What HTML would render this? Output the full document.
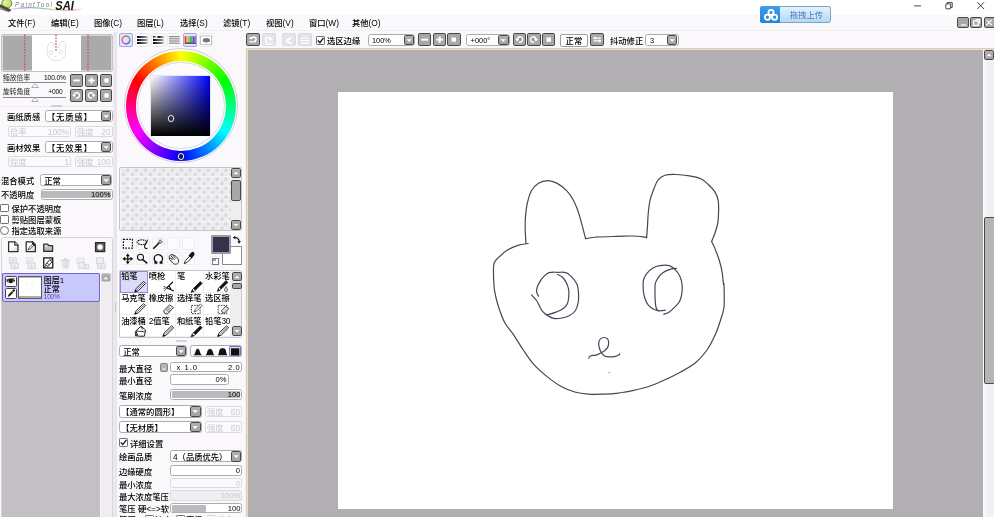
<!DOCTYPE html>
<html lang="zh"><head><meta charset="utf-8"><title>PaintTool SAI</title>
<style>
html,body{margin:0;padding:0;}
body{width:994px;height:517px;overflow:hidden;position:relative;background:#faf8fb;font-family:"Liberation Sans","Noto Sans CJK SC",sans-serif;font-size:8.3px;color:#000;font-weight:500;}
#root{position:absolute;left:0;top:0;width:994px;height:517px;overflow:hidden;will-change:transform;}
.a{position:absolute;box-sizing:border-box;}
.t{position:absolute;white-space:nowrap;line-height:10px;height:10px;}
.btn{border:1.6px solid #484848;border-radius:1.8px;background:#a8a7a8;}
.btn svg{position:absolute;left:0;top:0;width:100%;height:100%;display:block;}
.btn.dis{border-color:#dbd9dd;background:#e6e4e8;}
.inp{background:#fff;border:1px solid #adabaf;border-radius:2.5px;}
.inpd{background:#fbfafc;border:1px solid #dcdade;border-radius:2px;}
.dt{color:#cbc9ce;font-weight:400;}
.bar{background:#fff;border:1px solid #adabaf;border-radius:2.5px;}
.sw{position:absolute;}
svg{display:block;}
</style></head>
<body><div id="root">
<div class="a " style="left:0.00px;top:0.00px;width:994.00px;height:14.90px;background:#fff;"></div>
<div class="a " style="left:0.00px;top:30.20px;width:994.00px;height:0.60px;background:#f1eff3;"></div>
<div class="a " style="left:0.00px;top:30.80px;width:994.00px;height:0.80px;background:#fdfcfd;"></div>
<svg class="a" style="left:0;top:0;" width="90" height="14" viewBox="0 0 90 14">
<defs><linearGradient id="rb" x1="0" x2="1" y1="0" y2="0"><stop offset="0" stop-color="#b090d0" stop-opacity="0.2"/><stop offset="0.2" stop-color="#8aa0e0"/><stop offset="0.45" stop-color="#9ad0a0"/><stop offset="0.65" stop-color="#e8d890"/><stop offset="0.85" stop-color="#e8a0b0"/><stop offset="1" stop-color="#e8a0c0" stop-opacity="0"/></linearGradient></defs>
<ellipse cx="6.8" cy="3.4" rx="5" ry="4.7" fill="#cfe07c" stroke="#5f8a3c" stroke-width="1"/>
<ellipse cx="5.4" cy="2.6" rx="2.2" ry="1.8" fill="#e4eea0"/>
<path d="M-1 5.2 L10.6 10.6" stroke="#35562c" stroke-width="2.4"/>
<path d="M-1 6.6 L8 10.8" stroke="#b8322c" stroke-width="1"/>
<path d="M0 8.6 L9 11.6" stroke="#54408a" stroke-width="1.2" stroke-opacity="0.7"/>
<path d="M10 9.4 Q23 6.9 37 7.8 Q47 8.7 55 9.9 Q68 11.2 84 8.8" fill="none" stroke="url(#rb)" stroke-width="1.2"/>
<text x="15" y="7" font-family="'Liberation Sans',sans-serif" font-style="italic" font-size="6.4" fill="#7c7c7c" textLength="37" lengthAdjust="spacing">PaintTool</text>
<text x="55.2" y="9.5" font-family="'Liberation Sans',sans-serif" font-style="italic" font-weight="bold" font-size="13.4" fill="#111" textLength="18.6" lengthAdjust="spacingAndGlyphs">SAI</text>
</svg>
<div class="t " style="left:8.00px;top:18.00px;">文件(F)</div>
<div class="t " style="left:51.00px;top:18.00px;">编辑(E)</div>
<div class="t " style="left:94.00px;top:18.00px;">图像(C)</div>
<div class="t " style="left:137.00px;top:18.00px;">图层(L)</div>
<div class="t " style="left:180.00px;top:18.00px;">选择(S)</div>
<div class="t " style="left:223.00px;top:18.00px;">滤镜(T)</div>
<div class="t " style="left:266.00px;top:18.00px;">视图(V)</div>
<div class="t " style="left:309.00px;top:18.00px;">窗口(W)</div>
<div class="t " style="left:352.00px;top:18.00px;">其他(O)</div>
<div class="a " style="left:759.90px;top:5.50px;width:71.50px;height:17.30px;border-radius:2.2px;border:1px solid #78a6c4;background:linear-gradient(#e4f2fc,#b4d8f4);"></div>
<div class="a " style="left:759.90px;top:5.50px;width:20.60px;height:17.30px;border-radius:2.2px 0 0 2.2px;background:linear-gradient(#3d9ee9,#2283da);"></div>
<svg class="a" style="left:763.5px;top:8.5px" width="14" height="12" viewBox="0 0 14 12"><g fill="none" stroke="#fff" stroke-width="1.9"><circle cx="7" cy="3.4" r="2.6"/><circle cx="3.4" cy="8.2" r="2.6"/><circle cx="10.6" cy="8.2" r="2.6"/></g></svg>
<div class="t " style="left:789.80px;top:10.10px;color:#4580ba;font-weight:400;">拖拽上传</div>
<svg class="a" style="left:905px;top:0" width="89" height="14" viewBox="0 0 89 14"><g fill="none" stroke="#222" stroke-width="0.85"><path d="M9.2 5.9 H16"/><rect x="40.8" y="3.9" width="4.9" height="4.9" rx="0.6"/><path d="M42.2 3.9 V2.6 H47.2 V7.4 H45.7"/><path d="M72.3 2.2 L79.1 9.1 M79.1 2.2 L72.3 9.1"/></g></svg>
<div class="a btn" style="left:957.20px;top:17.00px;width:11.40px;height:11.20px;"><svg viewBox="0 0 19 19" preserveAspectRatio="none"></svg></div>
<div class="a btn" style="left:970.40px;top:17.00px;width:11.40px;height:11.20px;"><svg viewBox="0 0 19 19" preserveAspectRatio="none"></svg></div>
<div class="a btn" style="left:983.60px;top:17.00px;width:11.40px;height:11.20px;"><svg viewBox="0 0 19 19" preserveAspectRatio="none"></svg></div>
<svg class="a" style="left:957.6px;top:17.2px" width="37" height="11" viewBox="0 0 37 11"><g fill="none" stroke="#fff" stroke-width="1.2"><path d="M2.8 8 H8.2"/><rect x="15.6" y="4" width="4.6" height="4.4"/><path d="M17.5 2.6 H21.6 V6.4"/><path d="M28.4 2.8 L33.8 8.2 M33.8 2.8 L28.4 8.2"/></g></svg>
<div class="a " style="left:1.00px;top:33.60px;width:111.60px;height:38.40px;background:#aaaaaa;border:1px solid #c4c2c6;border-radius:2.5px;box-shadow:inset 0 0 0 0.8px #e6e6e8;"></div>
<div class="a " style="left:32.20px;top:34.60px;width:48.40px;height:36.40px;background:#fff;"></div>
<svg class="a" style="left:1px;top:34px" width="112" height="38" viewBox="1 34 112 38"><g stroke="#d04474" stroke-width="1.25" stroke-dasharray="1.6 1.3" fill="none"><path d="M24.8 34.6 V71"/><path d="M56 34.6 V52"/><path d="M88 34.6 V71"/></g>
<g fill="none" stroke="#cbcbd3" stroke-width="0.6"><path d="M47.5 54 C46.5 51 47 46.5 49 44 C50 41.5 52.5 42 53.5 44 L54.5 47.5 L59 47.5 C59 45 60 42 62 41.5 C65 41.5 66.5 43.5 65.5 46.5 L65 49 C66.5 53 65 57 62 59 C58 61.5 53 61.5 50 58.5 C48.5 57 48 55.5 47.5 54 Z"/><circle cx="51.2" cy="52.5" r="1.7"/><circle cx="60.6" cy="52" r="1.7"/><path d="M54.6 57.5 L55.6 56.2 L56.6 57.5"/></g></svg>
<div class="t " style="left:3.00px;top:72.50px;font-size:6.8px;color:#3c3c3c;">缩放倍率</div>
<div class="t " style="right:928.20px;top:72.50px;font-size:6.6px;letter-spacing:-0.1px;">100.0%</div>
<div class="a " style="left:3.00px;top:82.20px;width:63.00px;height:1.00px;background:#8a888c;"></div>
<svg class="a" style="left:30.5px;top:83px" width="8" height="5" viewBox="0 0 8 5"><path d="M4 0.5 L7.3 4.5 H0.7 Z" fill="#fff" stroke="#99979b" stroke-width="0.8"/></svg>
<div class="t " style="left:3.00px;top:86.90px;font-size:6.8px;color:#3c3c3c;">旋转角度</div>
<div class="t " style="right:931.40px;top:86.90px;font-size:6.6px;letter-spacing:-0.1px;">+000</div>
<div class="a " style="left:3.00px;top:96.60px;width:63.00px;height:1.00px;background:#8a888c;"></div>
<svg class="a" style="left:30.5px;top:97.4px" width="8" height="5" viewBox="0 0 8 5"><path d="M4 0.5 L7.3 4.5 H0.7 Z" fill="#fff" stroke="#99979b" stroke-width="0.8"/></svg>
<div class="a btn" style="left:70.30px;top:74.40px;width:12.80px;height:12.70px;"><svg viewBox="0 0 19 19" preserveAspectRatio="none"><rect x="4" y="8" width="11.4" height="3.4" fill="#fff"/></svg></div>
<div class="a btn" style="left:85.00px;top:74.40px;width:12.80px;height:12.70px;"><svg viewBox="0 0 19 19" preserveAspectRatio="none"><rect x="4" y="8" width="11.4" height="3.4" fill="#fff"/><rect x="8" y="4.2" width="3.4" height="11" fill="#fff"/></svg></div>
<div class="a btn" style="left:99.70px;top:74.40px;width:12.80px;height:12.70px;"><svg viewBox="0 0 19 19" preserveAspectRatio="none"><rect x="6" y="6" width="7.6" height="7.4" fill="#fff"/></svg></div>
<div class="a btn" style="left:70.30px;top:89.10px;width:12.80px;height:12.70px;"><svg viewBox="0 0 19 19" preserveAspectRatio="none"><path d="M8.63 13.82 A4.6 4.6 0 1 0 5.62 9.1" fill="none" stroke="#fff" stroke-width="2.5"/><path d="M2 8.4 L9.2 8.4 L5.6 12.8 Z" fill="#fff"/><circle cx="10.2" cy="9.5" r="1.6" fill="#8a898a"/></svg></div>
<div class="a btn" style="left:85.00px;top:89.10px;width:12.80px;height:12.70px;"><svg viewBox="0 0 19 19" preserveAspectRatio="none"><path d="M10.37 13.82 A4.6 4.6 0 1 1 13.38 9.1" fill="none" stroke="#fff" stroke-width="2.5"/><path d="M17 8.4 L9.8 8.4 L13.4 12.8 Z" fill="#fff"/><circle cx="8.8" cy="9.5" r="1.6" fill="#8a898a"/></svg></div>
<div class="a btn" style="left:99.70px;top:89.10px;width:12.80px;height:12.70px;"><svg viewBox="0 0 19 19" preserveAspectRatio="none"><rect x="6" y="6" width="7.6" height="7.4" fill="#fff"/></svg></div>
<div class="a " style="left:0.00px;top:105.60px;width:113.00px;height:1.00px;background:#eceaee;"></div>
<div class="a " style="left:51.00px;top:105.20px;width:10.50px;height:1.80px;background:#cfcdd1;border-radius:1px;"></div>
<div class="t " style="left:7.00px;top:111.80px;">画纸质感</div>
<div class="a inp" style="left:45.00px;top:110.00px;width:67.50px;height:12.40px;"></div><div class="t " style="left:47.00px;top:112.00px;letter-spacing:0.8px;">【无质感】</div><div class="a btn" style="left:101.10px;top:111.00px;width:10.40px;height:10.40px;border-width:1.3px;background:linear-gradient(#b2b1b2,#a3a2a3);"><svg viewBox="0 0 19 19" preserveAspectRatio="none"><path d="M3.4 7.4 L15.6 7.4 L9.5 13.4 Z" fill="#fff"/></svg></div>
<div class="a inpd" style="left:7.60px;top:125.80px;width:63.60px;height:11.00px;"></div>
<div class="t dt" style="left:10.00px;top:127.00px;">倍率</div>
<div class="t dt" style="right:925.00px;top:127.00px;">100%</div>
<div class="a inpd" style="left:75.00px;top:125.80px;width:37.50px;height:11.00px;"></div>
<div class="t dt" style="left:77.00px;top:127.00px;">强度</div>
<div class="t dt" style="right:883.50px;top:127.00px;">20</div>
<div class="t " style="left:7.00px;top:142.50px;">画材效果</div>
<div class="a inp" style="left:45.00px;top:140.50px;width:67.50px;height:12.60px;"></div><div class="t " style="left:47.00px;top:142.60px;letter-spacing:0.8px;">【无效果】</div><div class="a btn" style="left:101.10px;top:141.60px;width:10.40px;height:10.40px;border-width:1.3px;background:linear-gradient(#b2b1b2,#a3a2a3);"><svg viewBox="0 0 19 19" preserveAspectRatio="none"><path d="M3.4 7.4 L15.6 7.4 L9.5 13.4 Z" fill="#fff"/></svg></div>
<div class="a inpd" style="left:7.60px;top:156.00px;width:63.60px;height:11.20px;"></div>
<div class="t dt" style="left:10.00px;top:157.30px;">程度</div>
<div class="t dt" style="right:925.00px;top:157.30px;">1</div>
<div class="a inpd" style="left:75.00px;top:156.00px;width:37.50px;height:11.20px;"></div>
<div class="t dt" style="left:77.00px;top:157.30px;">强度</div>
<div class="t dt" style="right:883.50px;top:157.30px;">100</div>
<div class="t " style="left:1.00px;top:175.50px;">混合模式</div>
<div class="a inp" style="left:40.30px;top:173.60px;width:72.20px;height:12.40px;"></div><div class="t " style="left:44.30px;top:175.60px;">正常</div><div class="a btn" style="left:101.10px;top:174.60px;width:10.40px;height:10.40px;border-width:1.3px;background:linear-gradient(#b2b1b2,#a3a2a3);"><svg viewBox="0 0 19 19" preserveAspectRatio="none"><path d="M3.4 7.4 L15.6 7.4 L9.5 13.4 Z" fill="#fff"/></svg></div>
<div class="t " style="left:1.00px;top:190.00px;">不透明度</div>
<div class="a bar" style="left:40.50px;top:188.80px;width:72.00px;height:11.20px;"></div>
<div class="a " style="left:42.40px;top:190.60px;width:68.20px;height:7.60px;background:#bab9bb;border-radius:1px;"></div>
<div class="t " style="right:883.50px;top:190.10px;font-size:7.6px;">100%</div>
<div class="a " style="left:0.00px;top:203.60px;width:9.00px;height:8.80px;background:#fff;border:1px solid #707070;border-radius:1.2px;"></div>
<div class="t " style="left:11.50px;top:203.90px;">保护不透明度</div>
<div class="a " style="left:0.00px;top:214.80px;width:9.00px;height:8.80px;background:#fff;border:1px solid #707070;border-radius:1.2px;"></div>
<div class="t " style="left:11.50px;top:215.30px;">剪贴图层蒙板</div>
<div class="a " style="left:0.00px;top:226.00px;width:9.00px;height:9.00px;background:#fff;border:1px solid #707070;border-radius:50%;"></div>
<div class="t " style="left:11.50px;top:226.30px;">指定选取来源</div>
<div class="a " style="left:1.00px;top:237.00px;width:111.80px;height:290.00px;background:#faf8fb;border:1px solid #d6d4d8;border-radius:2.5px;"></div>
<div class="a " style="left:2.40px;top:272.60px;width:98.00px;height:250.00px;background:#c2c0c3;"></div>
<div class="a " style="left:100.60px;top:272.60px;width:11.00px;height:250.00px;background:#efedf0;"></div>
<div class="a " style="left:2.40px;top:272.60px;width:98.00px;height:29.00px;background:#c9c8fd;border:1.4px solid #7465cc;border-radius:2px;"></div>
<div class="a " style="left:5.10px;top:276.00px;width:11.60px;height:10.60px;background:#fff;border:1.1px solid #444;border-radius:1.6px;"></div>
<div class="a " style="left:5.10px;top:288.30px;width:11.60px;height:11.20px;background:#fff;border:1.1px solid #444;border-radius:1.6px;"></div>
<svg class="a" style="left:5.2px;top:276px" width="12" height="24" viewBox="0 0 12 24"><path d="M1.6 5.4 Q5.6 1.4 9.8 5" stroke="#222" stroke-width="1.3" fill="none"/><path d="M1.8 5.6 Q5.8 8.4 9.6 5.4" stroke="#444" stroke-width="0.7" fill="none"/><circle cx="5.8" cy="5.2" r="1.9" fill="#111"/><path d="M1.4 3.6 L9.6 2.6" stroke="#333" stroke-width="0.8"/><path d="M2.6 21 L3.6 18.6 L7 15 L8.4 16.4 L5 20 Z" fill="#222"/><path d="M7.2 14.6 L8.8 13 L10.2 14.4 L8.6 16 Z" fill="#111"/></svg>
<div class="a " style="left:18.20px;top:276.00px;width:23.80px;height:23.40px;background:#fff;border:1.2px solid #5c5c5c;"></div>
<div class="a " style="left:19.40px;top:296.20px;width:21.40px;height:2.20px;background:#adadad;"></div>
<div class="a " style="left:19.40px;top:277.20px;width:21.40px;height:1.30px;background:#bdbdbd;"></div>
<svg class="a" style="left:24px;top:280px" width="12" height="12" viewBox="0 0 12 12"><g fill="none" stroke="#e6e6ea" stroke-width="0.5"><path d="M2 6 C1.8 3.6 2.6 2 3.6 2.4 L4.4 4 L7.2 4 C7.4 2.4 8.6 1.8 9.4 2.8 L9.4 5 C10 7.6 8.6 9.4 6 9.6 C3.6 9.6 2.2 8 2 6 Z"/></g></svg>
<div class="t " style="left:43.80px;top:275.80px;font-size:8px;">图层1</div>
<div class="t " style="left:43.80px;top:284.90px;font-size:8px;">正常</div>
<div class="t " style="left:43.80px;top:291.50px;font-size:6.6px;color:#5050a0;letter-spacing:-0.3px;">100%</div>
<div class="a btn" style="border-color:#cdcbd0;background:#dbd9dd;left:101.10px;top:272.60px;width:9.80px;height:9.80px;border-width:1.3px;background:linear-gradient(#b2b1b2,#a3a2a3);"><svg viewBox="0 0 19 19" preserveAspectRatio="none"><path d="M3.4 12.6 L15.6 12.6 L9.5 6.6 Z" fill="#fff"/></svg></div>
<svg class="a" style="left:2px;top:238px" width="110" height="34" viewBox="2 238 110 34">
<defs><linearGradient id="pg" x1="0" y1="0" x2="1" y2="1"><stop offset="0.45" stop-color="#fff"/><stop offset="1" stop-color="#d4d4d8"/></linearGradient><linearGradient id="fg" x1="0" y1="0" x2="0" y2="1"><stop offset="0" stop-color="#e2e2e4"/><stop offset="1" stop-color="#a4a4a8"/></linearGradient><radialGradient id="mg"><stop offset="0.55" stop-color="#fff"/><stop offset="1" stop-color="#fff" stop-opacity="0"/></radialGradient></defs>
<g stroke="#2c2c2c" stroke-width="1.25" stroke-linejoin="round">
<path d="M8.6 241.8 H14.8 L18 245 V251.6 H8.6 Z" fill="url(#pg)"/><path d="M14.8 241.8 V245 H18" fill="#fff"/>
<path d="M26.2 241.8 H32.2 L35.4 245 V251.6 H26.2 Z" fill="url(#pg)"/><path d="M32.2 241.8 L35.4 245 L33 245.6 Z" fill="#2c2c2c"/><path d="M28 250 L29 247.6 L32.6 244.4 L33.6 245.6 L30.2 249 Z" fill="#fff" stroke-width="0.8"/>
<path d="M43.7 244 H47.6 L48.8 245.6 H52.6 V251.3 H43.7 Z" fill="url(#fg)"/>
</g>
<rect x="95.5" y="242.6" width="9.2" height="9" fill="#5e5e60" stroke="#2a2a2a" stroke-width="1.2"/><circle cx="100.1" cy="247.1" r="3.6" fill="url(#mg)"/>
<g fill="#f0eff1" stroke="#d6d4d9" stroke-width="1">
<rect x="9.4" y="257.8" width="6.8" height="5.4"/><rect x="11" y="263" width="7.2" height="5.6"/>
<rect x="26.2" y="257.8" width="6.8" height="5.4" stroke-dasharray="1.2 0.9"/><rect x="28" y="263" width="7.2" height="5.6"/>
<path d="M62.4 260.8 H68.6 L68 267.8 H63 Z"/><path d="M60.8 260.4 H70.2 M63.8 258.8 H67.2" fill="none" stroke-width="1.3"/>
<rect x="77" y="258" width="7" height="5.6" stroke-dasharray="1.2 0.9"/><rect x="78.6" y="262.6" width="6" height="5.6"/><rect x="84.4" y="264.6" width="4.4" height="4"/>
<rect x="96.4" y="257.8" width="7" height="6"/><rect x="97.6" y="263.8" width="7.4" height="4.8"/>
</g>
<g stroke="#d0ced3" stroke-width="0.8" fill="none"><path d="M11.4 260.4 H14.2 M12.8 259 V261.8 M14.6 264.6 V267.4 M13.4 266.2 L14.6 267.4 L15.8 266.2"/><path d="M28.2 260.4 H31 M31.6 264.6 V267.4 M30.4 266.2 L31.6 267.4 L32.8 266.2"/><path d="M65 262 V266.8 M66.4 262 V266.8"/><path d="M99.6 266.2 H103 M101.3 264.8 V267.6"/></g>
<g><rect x="43.7" y="257.9" width="9" height="10" fill="#fff" stroke="#222" stroke-width="1.35"/><path d="M44.4 267.2 L52 258.6" stroke="#222" stroke-width="1"/><path d="M45.4 264.6 L49.6 259.8 L52.2 261.6 L48 266.6 Z" fill="#f0f0f0" stroke="#222" stroke-width="0.9"/><path d="M46.8 263 L49.4 265" stroke="#222" stroke-width="0.7"/></g>
</svg>
<div class="a " style="left:113.40px;top:31.60px;width:3.20px;height:490.00px;background:linear-gradient(to right,#edebef,#e6e4e8);"></div>
<div class="a " style="left:114.90px;top:302.00px;width:1.30px;height:10.00px;background:#c9c7cb;border-radius:1px;"></div>
<div class="a " style="left:118.80px;top:33.40px;width:14.40px;height:13.20px;background:#e4e2fa;border:1px solid #a8a4dc;border-radius:2px;"></div>
<div class="a " style="left:134.85px;top:33.40px;width:14.40px;height:13.20px;background:#fbfafc;border:1px solid #ebe9ed;border-radius:2px;"></div>
<div class="a " style="left:150.90px;top:33.40px;width:14.40px;height:13.20px;background:#fbfafc;border:1px solid #ebe9ed;border-radius:2px;"></div>
<div class="a " style="left:166.95px;top:33.40px;width:14.40px;height:13.20px;background:#fbfafc;border:1px solid #ebe9ed;border-radius:2px;"></div>
<div class="a " style="left:183.00px;top:33.40px;width:14.40px;height:13.20px;background:#e4e2fa;border:1px solid #a8a4dc;border-radius:2px;"></div>
<div class="a " style="left:199.05px;top:33.40px;width:14.40px;height:13.20px;background:#fbfafc;border:1px solid #ebe9ed;border-radius:2px;"></div>
<svg class="a" style="left:118px;top:33px" width="100" height="14" viewBox="118 33 100 14">
<defs><linearGradient id="hg" x1="0" x2="1"><stop offset="0" stop-color="#000"/><stop offset="1" stop-color="#000" stop-opacity="0.35"/></linearGradient></defs>
<circle cx="126" cy="40" r="3.8" fill="none" stroke="#c050c0" stroke-width="1.3"/>
<path d="M126 36.2 A3.8 3.8 0 0 1 129.8 40" fill="none" stroke="#60c060" stroke-width="1.3"/>
<path d="M129.8 40 A3.8 3.8 0 0 1 126 43.8" fill="none" stroke="#4080e0" stroke-width="1.3"/>
<path d="M122.2 40 A3.8 3.8 0 0 1 126 36.2" fill="none" stroke="#e08040" stroke-width="1.3"/>
<g fill="url(#hg)"><rect x="137" y="36" width="10.4" height="2"/><rect x="137" y="39" width="10.4" height="2"/><rect x="137" y="42" width="10.4" height="2"/></g>
<g fill="url(#hg)"><rect x="153" y="36" width="3" height="1.6"/><rect x="157.5" y="36" width="6" height="2"/><rect x="153" y="39" width="10.4" height="2"/><rect x="153" y="42" width="10.4" height="2"/></g>
<g fill="#8a8a8a"><rect x="169" y="36" width="10.6" height="1.2"/><rect x="169" y="38.2" width="10.6" height="1.2"/><rect x="169" y="40.4" width="10.6" height="1.2"/><rect x="169" y="42.6" width="10.6" height="1.2"/></g>
<g><rect x="184.6" y="36.2" width="1.5" height="6" fill="#e04040"/><rect x="186.2" y="36.2" width="1.5" height="6" fill="#e0a040"/><rect x="187.8" y="36.2" width="1.5" height="6" fill="#d0d040"/><rect x="189.4" y="36.2" width="1.5" height="6" fill="#40b040"/><rect x="191" y="36.2" width="1.5" height="6" fill="#40b0c0"/><rect x="192.6" y="36.2" width="1.5" height="6" fill="#4060d0"/><rect x="194.2" y="36.2" width="1.5" height="6" fill="#a040c0"/><rect x="184.6" y="42.4" width="11.2" height="1.4" fill="#333"/></g>
<rect x="200.6" y="36" width="11" height="8.4" fill="#fff" stroke="#b8b6ba" stroke-width="0.8"/><ellipse cx="206.4" cy="40.2" rx="3.6" ry="2.2" fill="#777"/>
</svg>
<div class="a " style="left:123.50px;top:48.40px;width:114.80px;height:114.80px;border-radius:50%;border:1px solid #cfcdd6;background:#fefdfe;"></div>
<div class="a " style="left:125.60px;top:50.50px;width:110.60px;height:110.60px;border-radius:50%;background:conic-gradient(from 0deg,#ffff00,#00ff00,#00ffff,#0000ff,#ff00ff,#ff0000,#ffff00);"></div>
<div class="a " style="left:136.10px;top:61.00px;width:89.60px;height:89.60px;border-radius:50%;background:#fefdfe;"></div>
<div class="a " style="left:137.20px;top:62.10px;width:87.40px;height:87.40px;border-radius:50%;background:#fbfafc;border:1px solid #d9d7de;"></div>
<div class="a " style="left:150.40px;top:75.40px;width:60.40px;height:60.80px;background:#e6e4e8;"></div>
<div class="a " style="left:151.20px;top:76.20px;width:59.00px;height:59.40px;background:linear-gradient(to bottom,rgba(0,0,0,0),#000),linear-gradient(to right,#fff,#0000ff);"></div>
<div class="a " style="left:167.70px;top:115.30px;width:6.80px;height:6.80px;border-radius:50%;border:1.8px solid #f0f0f0;box-shadow:0 0 0 0.5px #555, inset 0 0 0 1px #1a1a1a;"></div>
<div class="a " style="left:177.60px;top:153.20px;width:6.80px;height:6.80px;border-radius:50%;border:1.8px solid #f6f6f6;box-shadow:0 0 0 0.6px #333, inset 0 0 0 1.1px #111;"></div>
<div class="a " style="left:119.40px;top:166.60px;width:122.80px;height:64.60px;border:1px solid #c6c4c8;border-radius:2px;background:#f3f3f5;"></div>
<svg class="a" style="left:120.5px;top:167.7px" width="110" height="62.4" viewBox="0 0 110 62.4"><defs><pattern id="ck" width="8.95" height="8.95" patternUnits="userSpaceOnUse"><rect width="8.95" height="8.95" fill="#f7f7f9"/><rect x="0.6" y="0.5" width="3.7" height="3.5" fill="#ececef"/><rect x="4.8" y="4.6" width="3.7" height="3.5" fill="#ececef"/><rect x="4.8" y="0.5" width="3.7" height="3.5" fill="#d9d9dd"/><rect x="0.6" y="4.6" width="3.7" height="3.5" fill="#d9d9dd"/></pattern></defs><rect width="110" height="62.4" fill="url(#ck)"/></svg>
<div class="a " style="left:230.60px;top:167.60px;width:10.60px;height:62.60px;background:#efedf0;"></div>
<div class="a btn" style="left:230.80px;top:168.40px;width:10.00px;height:9.90px;border-width:1.3px;background:linear-gradient(#b2b1b2,#a3a2a3);"><svg viewBox="0 0 19 19" preserveAspectRatio="none"><path d="M3.4 12.6 L15.6 12.6 L9.5 6.6 Z" fill="#fff"/></svg></div>
<div class="a btn" style="left:230.80px;top:180.00px;width:10.00px;height:20.60px;"></div>
<div class="a btn" style="left:230.80px;top:220.00px;width:10.00px;height:9.60px;border-width:1.3px;background:linear-gradient(#b2b1b2,#a3a2a3);"><svg viewBox="0 0 19 19" preserveAspectRatio="none"><path d="M3.4 7.4 L15.6 7.4 L9.5 13.4 Z" fill="#fff"/></svg></div>
<div class="a " style="left:121.20px;top:237.00px;width:13.20px;height:13.20px;background:#fbfafc;border:1px solid #eeecf0;border-radius:1.5px;"></div>
<div class="a " style="left:136.35px;top:237.00px;width:13.20px;height:13.20px;background:#fbfafc;border:1px solid #eeecf0;border-radius:1.5px;"></div>
<div class="a " style="left:151.50px;top:237.00px;width:13.20px;height:13.20px;background:#fbfafc;border:1px solid #eeecf0;border-radius:1.5px;"></div>
<div class="a " style="left:166.65px;top:237.00px;width:13.20px;height:13.20px;background:#fbfafc;border:1px solid #eeecf0;border-radius:1.5px;"></div>
<div class="a " style="left:181.80px;top:237.00px;width:13.20px;height:13.20px;background:#fbfafc;border:1px solid #eeecf0;border-radius:1.5px;"></div>
<div class="a " style="left:121.20px;top:252.20px;width:13.20px;height:13.20px;background:#fbfafc;border:1px solid #eeecf0;border-radius:1.5px;"></div>
<div class="a " style="left:136.35px;top:252.20px;width:13.20px;height:13.20px;background:#fbfafc;border:1px solid #eeecf0;border-radius:1.5px;"></div>
<div class="a " style="left:151.50px;top:252.20px;width:13.20px;height:13.20px;background:#fbfafc;border:1px solid #eeecf0;border-radius:1.5px;"></div>
<div class="a " style="left:166.65px;top:252.20px;width:13.20px;height:13.20px;background:#fbfafc;border:1px solid #eeecf0;border-radius:1.5px;"></div>
<div class="a " style="left:181.80px;top:252.20px;width:13.20px;height:13.20px;background:#fbfafc;border:1px solid #eeecf0;border-radius:1.5px;"></div>
<svg class="a" style="left:120px;top:236px" width="78" height="31" viewBox="120 236 78 31">
<rect x="123.4" y="239.3" width="9" height="8.8" fill="none" stroke="#111" stroke-width="1.2" stroke-dasharray="1.7 1.2"/>
<g fill="none" stroke="#1a1a1a" stroke-width="1.1"><ellipse cx="141.8" cy="242.2" rx="4.6" ry="2.4" stroke-dasharray="1.8 0.7"/><path d="M147.4 239.6 C147.6 242 145.2 244.4 144.6 245.6 C144 247.6 145.8 249.2 147.4 248.2"/></g>
<path d="M153.3 248.8 L159.2 242.8" stroke="#111" stroke-width="1.6"/><circle cx="160.2" cy="241.8" r="1.3" fill="#fff" stroke="#222" stroke-width="0.8"/><g stroke="#666" stroke-width="0.6"><path d="M160.2 238.6 V239.8 M163.4 241.8 H162.2 M162.6 239.4 L161.8 240.2 M162.6 244.2 L161.8 243.4 M157.8 239.4 L158.6 240.2"/></g>
<g stroke="#111" stroke-width="1.2" fill="#111"><path d="M127.8 255 V262.6 M124 258.8 H131.6" fill="none"/><path d="M127.8 253.4 L129.9 256.2 H125.7 Z M127.8 264.2 L129.9 261.4 H125.7 Z M122.4 258.8 L125.2 256.7 V260.9 Z M133.2 258.8 L130.4 256.7 V260.9 Z" stroke="none"/></g>
<circle cx="140.5" cy="257.3" r="3" fill="none" stroke="#111" stroke-width="1.05"/><path d="M142.8 259.6 L147.2 263.4" stroke="#111" stroke-width="1.5"/>
<path d="M156 262.2 C153.4 260 153.6 256.2 156.4 255 C159.4 253.8 162.8 255.8 162.6 258.8 C162.5 260.2 161.8 261.4 160.8 262.2" fill="none" stroke="#111" stroke-width="1.3"/><path d="M154.4 261.4 H157.4 V263.8 H154.4 Z M159.6 261.4 H162.6 V263.8 H159.6 Z" fill="#111"/>
<g fill="none" stroke="#222" stroke-width="0.9"><path d="M169.2 257.6 C168.8 255.2 171.4 253.8 173.6 255 C176.8 256.4 179.2 259.2 178.4 262.2 C177.6 264.6 174.6 264.8 172.8 263 L169.6 259.6 Z"/><path d="M170.6 255.4 L174.2 259.6 M172.4 254.6 L175.6 258.4 M169 258.4 L171.8 258.2 M171.4 259.8 L172.8 259"/></g>
<path d="M184.2 263.6 L185.4 260.6 L190 255.8 L191.8 257.6 L187.2 262.4 Z" fill="#fff" stroke="#111" stroke-width="0.9"/><path d="M189.4 255.4 L191.8 252.8 C193 251.8 194.6 253.2 193.8 254.6 L191.6 257.6 Z" fill="#111" stroke="#111" stroke-width="1.1"/>
</svg>
<div class="a " style="left:222.00px;top:246.00px;width:20.00px;height:19.20px;background:#fff;border:1px solid #8c8a8e;"></div>
<div class="a " style="left:211.00px;top:234.60px;width:19.80px;height:19.80px;background:#33334c;border:2px solid #9c9aa2;border-radius:1.2px;"></div>
<svg class="a" style="left:232px;top:235px" width="10" height="10" viewBox="0 0 10 10"><path d="M2 2.6 C5 2 7.4 4 7.2 7" fill="none" stroke="#111" stroke-width="1.2"/><path d="M0.8 2.8 L3.2 0.8 L3.4 4.2 Z M7.2 8.8 L5.4 6.2 L8.9 6.2 Z" fill="#111"/></svg>
<div class="a " style="left:210.40px;top:256.40px;width:9.80px;height:9.80px;background:#fbfafc;border:1px solid #efedf1;border-radius:1.5px;"></div>
<div class="a " style="left:212.00px;top:257.90px;width:7.00px;height:7.00px;background:#fff;border:1px solid #7c7a7e;"></div>
<div class="a " style="left:213.00px;top:258.90px;width:2.60px;height:2.60px;background:#a0a0a0;"></div>
<div class="a " style="left:119.40px;top:269.80px;width:122.80px;height:67.80px;background:#fff;border:1px solid #c9c7cb;border-radius:2px;"></div>
<div class="a " style="left:230.80px;top:270.80px;width:10.40px;height:65.80px;background:#efedf0;"></div>
<div class="a btn" style="left:231.50px;top:271.50px;width:10.00px;height:9.80px;border-width:1.3px;background:linear-gradient(#b2b1b2,#a3a2a3);"><svg viewBox="0 0 19 19" preserveAspectRatio="none"><path d="M3.4 12.6 L15.6 12.6 L9.5 6.6 Z" fill="#fff"/></svg></div>
<div class="a btn" style="left:231.50px;top:283.20px;width:10.00px;height:5.60px;"></div>
<div class="a btn" style="left:231.50px;top:326.40px;width:10.00px;height:9.80px;border-width:1.3px;background:linear-gradient(#b2b1b2,#a3a2a3);"><svg viewBox="0 0 19 19" preserveAspectRatio="none"><path d="M3.4 7.4 L15.6 7.4 L9.5 13.4 Z" fill="#fff"/></svg></div>
<div class="a " style="left:120.20px;top:270.80px;width:27.60px;height:22.20px;background:#dadafa;border:1.2px solid #938bd2;"></div>
<div class="t " style="left:121.20px;top:271.20px;letter-spacing:-0.15px;">铅笔</div>
<div class="a " style="left:147.80px;top:270.80px;width:28.10px;height:22.20px;border-right:1px solid #f0eef2;border-bottom:1px solid #f0eef2;"></div>
<div class="t " style="left:148.80px;top:271.20px;letter-spacing:-0.15px;">喷枪</div>
<div class="a " style="left:175.90px;top:270.80px;width:28.20px;height:22.20px;border-right:1px solid #f0eef2;border-bottom:1px solid #f0eef2;"></div>
<div class="t " style="left:176.90px;top:271.20px;letter-spacing:-0.15px;">笔</div>
<div class="a " style="left:204.10px;top:270.80px;width:26.70px;height:22.20px;border-right:1px solid #f0eef2;border-bottom:1px solid #f0eef2;"></div>
<div class="t " style="left:205.10px;top:271.20px;letter-spacing:-0.15px;">水彩笔</div>
<div class="a " style="left:120.20px;top:293.00px;width:27.60px;height:22.20px;border-right:1px solid #f0eef2;border-bottom:1px solid #f0eef2;"></div>
<div class="t " style="left:121.20px;top:293.40px;letter-spacing:-0.15px;">马克笔</div>
<div class="a " style="left:147.80px;top:293.00px;width:28.10px;height:22.20px;border-right:1px solid #f0eef2;border-bottom:1px solid #f0eef2;"></div>
<div class="t " style="left:148.80px;top:293.40px;letter-spacing:-0.15px;">橡皮擦</div>
<div class="a " style="left:175.90px;top:293.00px;width:28.20px;height:22.20px;border-right:1px solid #f0eef2;border-bottom:1px solid #f0eef2;"></div>
<div class="t " style="left:176.90px;top:293.40px;letter-spacing:-0.15px;">选择笔</div>
<div class="a " style="left:204.10px;top:293.00px;width:26.70px;height:22.20px;border-right:1px solid #f0eef2;border-bottom:1px solid #f0eef2;"></div>
<div class="t " style="left:205.10px;top:293.40px;letter-spacing:-0.15px;">选区擦</div>
<div class="a " style="left:120.20px;top:315.20px;width:27.60px;height:22.20px;border-right:1px solid #f0eef2;border-bottom:1px solid #f0eef2;"></div>
<div class="t " style="left:121.20px;top:315.60px;letter-spacing:-0.15px;">油漆桶</div>
<div class="a " style="left:147.80px;top:315.20px;width:28.10px;height:22.20px;border-right:1px solid #f0eef2;border-bottom:1px solid #f0eef2;"></div>
<div class="t " style="left:148.80px;top:315.60px;letter-spacing:-0.15px;">2值笔</div>
<div class="a " style="left:175.90px;top:315.20px;width:28.20px;height:22.20px;border-right:1px solid #f0eef2;border-bottom:1px solid #f0eef2;"></div>
<div class="t " style="left:176.90px;top:315.60px;letter-spacing:-0.15px;">和纸笔</div>
<div class="a " style="left:204.10px;top:315.20px;width:26.70px;height:22.20px;border-right:1px solid #f0eef2;border-bottom:1px solid #f0eef2;"></div>
<div class="t " style="left:205.10px;top:315.60px;letter-spacing:-0.15px;">铅笔30</div>
<svg class="a" style="left:119px;top:270px" width="112" height="68" viewBox="119 270 112 68"><g transform="translate(134.4,281.0)"><path d="M0.4 11 L1.8 7.4 L9.2 0.4 L11.2 2.4 L4 9.6 Z" fill="#fff" stroke="#2a2a2a" stroke-width="1"/><path d="M2.8 8.6 L10.2 1.4" stroke="#444" stroke-width="0.8"/><path d="M0.4 11 L2.6 10.2 L1.2 8.8 Z" fill="#111" stroke="#111" stroke-width="0.4"/></g><g transform="translate(162.5,281.0)"><path d="M1 7.6 L3.4 6.6 M1.6 10 L3.6 8.2 M1 5.6 L2.6 5.6" stroke="#222" stroke-width="0.8"/><path d="M3.6 7.4 L10.4 1 M4.4 7 L11.4 10 M6.6 5 L8.6 8.6" fill="none" stroke="#111" stroke-width="1.2"/></g><g transform="translate(190.7,281.0)"><path d="M4.6 9.2 L2.8 7.4 L9.6 0.6 L11.4 2.4 Z" fill="#111" stroke="#111" stroke-width="0.8"/><path d="M2.8 7.4 L4.6 9.2 L3 10.6 L1.4 9 Z" fill="#fff" stroke="#222" stroke-width="0.8"/><path d="M1.4 9 L3 10.6 L0.2 11.6 Z" fill="#111" stroke="#111" stroke-width="0.5"/></g><g transform="translate(217.4,281.0)"><path d="M3.8 8 L2 6.2 L8.6 -0.4 L10.4 1.4 Z" fill="#111" stroke="#111" stroke-width="0.8"/><path d="M2 6.2 L3.8 8 L2.4 9.4 L0.8 7.8 Z" fill="#fff" stroke="#222" stroke-width="0.8"/><path d="M0.8 7.8 L2.4 9.4 L-0.2 10.4 Z" fill="#111" stroke="#111" stroke-width="0.5"/><path d="M8.8 5.6 C7.2 7.8 6.8 9 7.4 10 C8.2 11.2 10.2 10.8 10.2 9.2 C10.2 8 9.4 7 8.8 5.6 Z" fill="#dcdcdc" stroke="#444" stroke-width="0.8"/></g><g transform="translate(134.4,303.2)"><path d="M0.4 11 L1.8 7.4 L9.2 0.4 L11.2 2.4 L4 9.6 Z" fill="#fff" stroke="#2a2a2a" stroke-width="1"/><path d="M2.8 8.6 L10.2 1.4" stroke="#444" stroke-width="0.8"/><path d="M0.4 11 L2.6 10.2 L1.2 8.8 Z" fill="#111" stroke="#111" stroke-width="0.4"/></g><g transform="translate(162.5,303.2)"><path d="M1 7.8 L7 1.6 L11 4.4 L5.2 10.6 L2.6 10.6 Z" fill="#e8e8e8" stroke="#333" stroke-width="0.9"/><path d="M3 6 L7 9 M4.2 4.8 L8 7.8 M5.4 3.6 L9.2 6.6" stroke="#555" stroke-width="0.7"/></g><g transform="translate(190.7,303.2)"><rect x="0.8" y="2.2" width="8.6" height="8.2" fill="none" stroke="#222" stroke-width="0.9" stroke-dasharray="1.5 1.1"/><path d="M3.4 8.6 L4.6 6 L9.8 0.8 L11.4 2.4 L6.2 7.6 Z" fill="#fff" stroke="#333" stroke-width="0.8"/></g><g transform="translate(217.4,303.2)"><rect x="0.8" y="2.2" width="8.6" height="8.2" fill="none" stroke="#222" stroke-width="0.9" stroke-dasharray="1.5 1.1"/><path d="M4 7.6 L8.4 3 L11.4 5.2 L7.2 9.8 L5.2 9.8 Z" fill="#ddd" stroke="#333" stroke-width="0.8"/></g><g transform="translate(134.4,325.4)"><path d="M1.4 5.6 L6.6 0.8 L11.2 4.6 L10 10.8 L3.8 10.8 Z" fill="#fff" stroke="#222" stroke-width="1"/><path d="M1.4 5.6 L10.6 6.4 M6.4 1 L8.4 4.2" stroke="#222" stroke-width="0.9"/><path d="M1 6 L1 10.6 L3.4 10.6" fill="#444" stroke="#222" stroke-width="0.8"/></g><g transform="translate(162.5,325.4)"><path d="M0.4 11 L1.8 7.4 L9.2 0.4 L11.2 2.4 L4 9.6 Z" fill="#fff" stroke="#2a2a2a" stroke-width="1"/><path d="M2.8 8.6 L10.2 1.4" stroke="#444" stroke-width="0.8"/><path d="M0.4 11 L2.6 10.2 L1.2 8.8 Z" fill="#111" stroke="#111" stroke-width="0.4"/></g><g transform="translate(190.7,325.4)"><path d="M4.6 9.2 L2.8 7.4 L9.6 0.6 L11.4 2.4 Z" fill="#111" stroke="#111" stroke-width="0.8"/><path d="M2.8 7.4 L4.6 9.2 L3 10.6 L1.4 9 Z" fill="#fff" stroke="#222" stroke-width="0.8"/><path d="M1.4 9 L3 10.6 L0.2 11.6 Z" fill="#111" stroke="#111" stroke-width="0.5"/></g><g transform="translate(217.4,325.4)"><path d="M0.4 11 L1.8 7.4 L9.2 0.4 L11.2 2.4 L4 9.6 Z" fill="#fff" stroke="#2a2a2a" stroke-width="1"/><path d="M2.8 8.6 L10.2 1.4" stroke="#444" stroke-width="0.8"/><path d="M0.4 11 L2.6 10.2 L1.2 8.8 Z" fill="#111" stroke="#111" stroke-width="0.4"/></g></svg>
<div class="a " style="left:176.00px;top:340.40px;width:10.50px;height:1.60px;background:#d4d2d6;border-radius:1px;"></div>
<div class="a inp" style="left:118.80px;top:344.60px;width:68.40px;height:12.80px;"></div><div class="t " style="left:123.20px;top:346.80px;">正常</div><div class="a btn" style="left:175.80px;top:345.80px;width:10.40px;height:10.40px;border-width:1.3px;background:linear-gradient(#b2b1b2,#a3a2a3);"><svg viewBox="0 0 19 19" preserveAspectRatio="none"><path d="M3.4 7.4 L15.6 7.4 L9.5 13.4 Z" fill="#fff"/></svg></div>
<div class="a inp" style="left:190.20px;top:344.60px;width:52.00px;height:12.80px;"></div>
<div class="a " style="left:229.40px;top:345.70px;width:11.70px;height:10.40px;background:#dad8f6;border:1px solid #7d75c4;border-radius:1px;"></div>
<svg class="a" style="left:190px;top:345px" width="52" height="12" viewBox="190 345 52 12"><g fill="#111"><path d="M192.8 355.2 L194.6 354.2 L196.3 349.6 Q197.7 347.8 199.1 349.6 L200.8 354.2 L202.6 355.2 Z"/><path d="M205.2 355.2 L206.5 354.2 L207.5 350.8 Q210 346.8 212.5 350.8 L213.5 354.2 L214.8 355.2 Z"/><path d="M217.6 355.2 L218.6 354 L219.3 350.4 Q219.7 348.5 221.4 348.3 L223.8 348.3 Q225.5 348.5 225.9 350.4 L226.6 354 L227.6 355.2 Z"/><rect x="231" y="348.3" width="8.3" height="6.9"/></g></svg>
<div class="t " style="left:119.00px;top:363.70px;">最大直径</div>
<div class="a " style="left:160.40px;top:362.80px;width:7.60px;height:8.90px;background:#b4b3b4;border:1px solid #858385;border-radius:1.5px;"></div>
<svg class="a" style="left:160.2px;top:362.8px" width="8.2" height="9" viewBox="0 0 8.2 9"><path d="M2.4 5.4 H5.8 L4.1 7.2 Z" fill="#fff"/></svg>
<div class="a bar" style="left:170.00px;top:362.00px;width:72.20px;height:10.40px;"></div>
<div class="t " style="left:176.60px;top:362.90px;font-size:7.6px;letter-spacing:1px;">x 1.0</div>
<div class="t " style="right:753.60px;top:362.90px;font-size:7.6px;letter-spacing:0.6px;">2.0</div>
<div class="t " style="left:119.00px;top:376.10px;">最小直径</div>
<div class="a bar" style="left:170.00px;top:374.40px;width:58.60px;height:10.40px;"></div>
<div class="t " style="right:767.60px;top:375.30px;font-size:7.6px;">0%</div>
<div class="t " style="left:119.00px;top:391.10px;">笔刷浓度</div>
<div class="a bar" style="left:170.00px;top:389.40px;width:72.20px;height:10.60px;"></div>
<div class="a " style="left:171.80px;top:391.20px;width:68.60px;height:7.00px;background:#bab9bb;border-radius:1px;"></div>
<div class="t " style="right:753.60px;top:390.40px;font-size:7.6px;">100</div>
<div class="a inp" style="left:118.80px;top:405.20px;width:83.00px;height:12.40px;"></div><div class="t " style="left:121.20px;top:407.20px;">【通常的圆形】</div><div class="a btn" style="left:190.40px;top:406.20px;width:10.40px;height:10.40px;border-width:1.3px;background:linear-gradient(#b2b1b2,#a3a2a3);"><svg viewBox="0 0 19 19" preserveAspectRatio="none"><path d="M3.4 7.4 L15.6 7.4 L9.5 13.4 Z" fill="#fff"/></svg></div>
<div class="a inpd" style="left:205.00px;top:405.80px;width:37.20px;height:11.40px;"></div>
<div class="t dt" style="left:207.00px;top:407.10px;">强度</div>
<div class="t dt" style="right:754.00px;top:407.10px;">50</div>
<div class="a inp" style="left:118.80px;top:420.60px;width:83.00px;height:12.40px;"></div><div class="t " style="left:121.20px;top:422.60px;">【无材质】</div><div class="a btn" style="left:190.40px;top:421.60px;width:10.40px;height:10.40px;border-width:1.3px;background:linear-gradient(#b2b1b2,#a3a2a3);"><svg viewBox="0 0 19 19" preserveAspectRatio="none"><path d="M3.4 7.4 L15.6 7.4 L9.5 13.4 Z" fill="#fff"/></svg></div>
<div class="a inpd" style="left:205.00px;top:421.20px;width:37.20px;height:11.40px;"></div>
<div class="t dt" style="left:207.00px;top:422.50px;">强度</div>
<div class="t dt" style="right:754.00px;top:422.50px;">50</div>
<div class="a " style="left:119.00px;top:438.20px;width:8.80px;height:8.80px;background:#fff;border:1px solid #707070;border-radius:1.2px;"></div>
<svg class="a" style="left:119px;top:438.2px" width="9" height="9" viewBox="0 0 9 9"><path d="M1.8 4.4 L3.8 6.6 L7.4 1.8" fill="none" stroke="#111" stroke-width="1.3"/></svg>
<div class="t " style="left:130.00px;top:438.50px;">详细设置</div>
<div class="t " style="left:119.00px;top:452.30px;">绘画品质</div>
<div class="a inp" style="left:170.00px;top:450.40px;width:72.20px;height:12.00px;"></div><div class="t " style="left:173.00px;top:452.20px;">4（品质优先）</div><div class="a btn" style="left:230.80px;top:451.20px;width:10.40px;height:10.40px;border-width:1.3px;background:linear-gradient(#b2b1b2,#a3a2a3);"><svg viewBox="0 0 19 19" preserveAspectRatio="none"><path d="M3.4 7.4 L15.6 7.4 L9.5 13.4 Z" fill="#fff"/></svg></div>
<div class="t " style="left:119.00px;top:467.10px;">边缘硬度</div>
<div class="a bar" style="left:170.00px;top:465.40px;width:72.20px;height:10.40px;"></div>
<div class="t " style="right:754.00px;top:466.30px;font-size:7.6px;">0</div>
<div class="t " style="left:119.00px;top:479.70px;">最小浓度</div>
<div class="a inpd" style="left:170.00px;top:478.00px;width:72.20px;height:10.20px;"></div>
<div class="t dt" style="right:754.00px;top:478.70px;font-size:7.6px;">0</div>
<div class="t " style="left:119.00px;top:492.10px;">最大浓度笔压</div>
<div class="a inpd" style="left:170.00px;top:490.40px;width:72.20px;height:10.20px;background:#efeef0;"></div>
<div class="t dt" style="right:754.00px;top:491.10px;font-size:7.6px;">100%</div>
<div class="t " style="left:119.00px;top:504.30px;">笔压 硬&lt;=&gt;软</div>
<div class="a bar" style="left:170.00px;top:502.80px;width:72.20px;height:10.60px;"></div>
<div class="a " style="left:171.80px;top:504.60px;width:34.40px;height:7.00px;background:#bab9bb;border-radius:1px;"></div>
<div class="t " style="right:753.60px;top:503.70px;font-size:7.6px;">100</div>
<div class="t " style="left:119.00px;top:514.90px;">笔压:</div>
<div class="a " style="left:145.00px;top:515.00px;width:8.60px;height:8.60px;background:#fff;border:1px solid #707070;border-radius:1.2px;"></div>
<div class="t " style="left:155.00px;top:514.90px;">浓度</div>
<div class="a " style="left:176.00px;top:515.00px;width:8.60px;height:8.60px;background:#fff;border:1px solid #707070;border-radius:1.2px;"></div>
<div class="t " style="left:186.00px;top:514.90px;">直径</div>
<div class="a " style="left:207.00px;top:515.00px;width:8.60px;height:8.60px;background:#fff;border:1px solid #d0ced2;border-radius:1.2px;"></div>
<div class="t dt" style="left:217.00px;top:514.90px;">混色</div>
<div class="a btn" style="left:246.20px;top:33.40px;width:13.70px;height:13.10px;"><svg viewBox="0 0 19 19" preserveAspectRatio="none"><path d="M7.6 8.6 A3.6 3.6 0 1 1 11.2 12.4" fill="none" stroke="#fff" stroke-width="2.3"/><path d="M3.4 8.6 L9.6 8.6 L5.4 4.2 Z" fill="#fff"/><path d="M3.6 13.4 H14.4" stroke="#fff" stroke-width="2"/></svg></div>
<div class="a btn dis" style="left:262.30px;top:33.40px;width:13.60px;height:13.10px;"><svg viewBox="0 0 19 19" preserveAspectRatio="none"></svg></div>
<div class="a btn dis" style="left:282.20px;top:33.40px;width:13.60px;height:13.10px;"><svg viewBox="0 0 19 19" preserveAspectRatio="none"></svg></div>
<div class="a btn dis" style="left:298.20px;top:33.40px;width:13.60px;height:13.10px;"><svg viewBox="0 0 19 19" preserveAspectRatio="none"></svg></div>
<svg class="a" style="left:262px;top:33.6px" width="50" height="13" viewBox="262 33.6 50 13"><g fill="none" stroke="#fff" stroke-width="1.4"><path d="M270.6 39.6 A2.6 2.6 0 1 0 268 42.2"/><path d="M265.4 43.8 H272.6"/><path d="M268.6 39.8 H273.4 L271 36.8 Z" fill="#fff" stroke="none"/><path d="M291.4 37 L286.8 40.4 L291.4 43.6" stroke-width="1.8"/><path d="M300.8 37.6 H309 M300.8 40.2 H309 M300.8 42.8 H309" stroke-width="1.1"/></g></svg>
<div class="a " style="left:316.00px;top:36.00px;width:9.20px;height:9.20px;background:#fff;border:1px solid #707070;border-radius:1.2px;"></div>
<svg class="a" style="left:316px;top:36px" width="9.2" height="9.2" viewBox="0 0 9 9"><path d="M1.8 4.4 L3.8 6.6 L7.4 1.8" fill="none" stroke="#111" stroke-width="1.3"/></svg>
<div class="t " style="left:327.00px;top:36.10px;">选区边缘</div>
<div class="a inp" style="left:367.60px;top:33.60px;width:47.60px;height:12.80px;"></div>
<div class="t " style="left:372.00px;top:35.70px;font-size:7.4px;">100%</div>
<div class="a btn" style="left:404.00px;top:34.80px;width:10.40px;height:10.40px;border-width:1.3px;background:linear-gradient(#b2b1b2,#a3a2a3);"><svg viewBox="0 0 19 19" preserveAspectRatio="none"><path d="M3.4 7.4 L15.6 7.4 L9.5 13.4 Z" fill="#fff"/></svg></div>
<div class="a btn" style="left:418.10px;top:33.30px;width:13.20px;height:13.00px;"><svg viewBox="0 0 19 19" preserveAspectRatio="none"><rect x="4" y="8" width="11.4" height="3.4" fill="#fff"/></svg></div>
<div class="a btn" style="left:432.75px;top:33.30px;width:13.20px;height:13.00px;"><svg viewBox="0 0 19 19" preserveAspectRatio="none"><rect x="4" y="8" width="11.4" height="3.4" fill="#fff"/><rect x="8" y="4.2" width="3.4" height="11" fill="#fff"/></svg></div>
<div class="a btn" style="left:447.40px;top:33.30px;width:13.20px;height:13.00px;"><svg viewBox="0 0 19 19" preserveAspectRatio="none"><rect x="6" y="6" width="7.6" height="7.4" fill="#fff"/></svg></div>
<div class="a inp" style="left:466.00px;top:33.60px;width:43.60px;height:12.80px;"></div>
<div class="t " style="left:470.60px;top:35.70px;font-size:7.4px;">+000°</div>
<div class="a btn" style="left:498.40px;top:34.80px;width:10.40px;height:10.40px;border-width:1.3px;background:linear-gradient(#b2b1b2,#a3a2a3);"><svg viewBox="0 0 19 19" preserveAspectRatio="none"><path d="M3.4 7.4 L15.6 7.4 L9.5 13.4 Z" fill="#fff"/></svg></div>
<div class="a btn" style="left:512.70px;top:33.30px;width:13.20px;height:13.00px;"><svg viewBox="0 0 19 19" preserveAspectRatio="none"><path d="M8.63 13.82 A4.6 4.6 0 1 0 5.62 9.1" fill="none" stroke="#fff" stroke-width="2.5"/><path d="M2 8.4 L9.2 8.4 L5.6 12.8 Z" fill="#fff"/><circle cx="10.2" cy="9.5" r="1.6" fill="#8a898a"/></svg></div>
<div class="a btn" style="left:527.40px;top:33.30px;width:13.20px;height:13.00px;"><svg viewBox="0 0 19 19" preserveAspectRatio="none"><path d="M10.37 13.82 A4.6 4.6 0 1 1 13.38 9.1" fill="none" stroke="#fff" stroke-width="2.5"/><path d="M17 8.4 L9.8 8.4 L13.4 12.8 Z" fill="#fff"/><circle cx="8.8" cy="9.5" r="1.6" fill="#8a898a"/></svg></div>
<div class="a btn" style="left:542.10px;top:33.30px;width:13.20px;height:13.00px;"><svg viewBox="0 0 19 19" preserveAspectRatio="none"><rect x="6" y="6" width="7.6" height="7.4" fill="#fff"/></svg></div>
<div class="a " style="left:560.20px;top:33.50px;width:27.80px;height:13.00px;background:#fff;border:1px solid #9f9da1;border-radius:2px;"></div>
<div class="t " style="left:565.60px;top:35.70px;">正常</div>
<div class="a btn" style="left:589.70px;top:33.30px;width:14.60px;height:13.00px;"><svg viewBox="0 0 19 19" preserveAspectRatio="none"><path d="M4 7 L15 7 M4 12 L15 12" stroke="#fff" stroke-width="2"/><path d="M3 7 L7 4 L7 10 Z M16 12 L12 9 L12 15 Z" fill="#fff"/></svg></div>
<div class="t " style="left:610.00px;top:35.90px;">抖动修正</div>
<div class="a inp" style="left:645.40px;top:33.60px;width:33.40px;height:12.80px;"></div>
<div class="t " style="left:650.00px;top:35.70px;font-size:7.4px;">3</div>
<div class="a btn" style="left:667.00px;top:34.80px;width:10.40px;height:10.40px;border-width:1.3px;background:linear-gradient(#b2b1b2,#a3a2a3);"><svg viewBox="0 0 19 19" preserveAspectRatio="none"><path d="M3.4 7.4 L15.6 7.4 L9.5 13.4 Z" fill="#fff"/></svg></div>
<div class="a " style="left:244.50px;top:47.50px;width:750.00px;height:472.00px;background:#f6efe5;"></div>
<div class="a " style="left:245.70px;top:48.30px;width:749.00px;height:472.00px;background:#dfceb5;"></div>
<div class="a " style="left:246.80px;top:49.30px;width:748.00px;height:472.00px;background:#e7ddd1;"></div>
<div class="a " style="left:248.00px;top:50.00px;width:746.00px;height:472.00px;background:#b1afb1;"></div>
<div class="a " style="left:337.50px;top:92.00px;width:555.60px;height:417.00px;background:#fff;"></div>
<div class="a " style="left:982.80px;top:50.00px;width:11.40px;height:468.00px;background:linear-gradient(to right,#fbfafc,#f2f0f3 40%);"></div>
<div class="a btn" style="left:984.00px;top:50.00px;width:10.00px;height:10.00px;border-width:1.3px;background:linear-gradient(#b2b1b2,#a3a2a3);"><svg viewBox="0 0 19 19" preserveAspectRatio="none"><path d="M3.4 12.6 L15.6 12.6 L9.5 6.6 Z" fill="#fff"/></svg></div>
<div class="a btn" style="left:984.00px;top:216.60px;width:10.60px;height:167.20px;background:#b6b4b6;"></div>
<svg class="a" style="left:338px;top:92px" width="555" height="416" viewBox="338 92 555 416"><g fill="none" stroke="#45455a" stroke-width="1.2" stroke-linecap="round" stroke-linejoin="round"><path d="M528.2 243.5 C526.5 243.8 521.4 244.3 517.9 245.4 C514.4 246.5 510.2 248.4 507.1 250.3 C504.0 252.2 501.2 255.0 499.0 257.1 C496.8 259.2 495.0 260.3 494.1 263.0 C493.2 265.7 493.5 269.3 493.5 273.3 C493.5 277.3 493.9 283.8 494.1 286.9 C494.3 290.0 494.5 290.1 494.9 292.0 C495.2 293.9 495.3 295.1 496.2 298.5 C497.1 301.9 498.7 307.8 500.3 312.1 C501.9 316.4 503.4 320.5 505.7 324.3 C507.9 328.1 510.9 330.8 513.8 335.1 C516.7 339.4 519.9 345.0 523.3 350.0 C526.7 355.0 530.1 360.4 534.2 364.9 C538.3 369.4 543.2 373.5 547.7 377.1 C552.2 380.7 556.7 384.0 561.2 386.5 C565.7 389.0 570.3 390.7 574.8 392.0 C579.3 393.3 583.3 393.8 588.3 394.1 C593.3 394.5 600.0 394.2 604.6 394.1 C609.2 394.0 611.6 393.9 616.2 393.3 C620.9 392.7 627.1 391.7 632.5 390.6 C637.9 389.5 643.3 388.3 648.7 386.5 C654.1 384.7 659.6 382.3 665.0 379.8 C670.4 377.3 676.0 374.6 681.2 371.7 C686.4 368.8 691.8 365.8 696.1 362.2 C700.4 358.6 703.8 354.5 707.0 350.0 C710.2 345.5 712.9 340.1 715.1 335.1 C717.4 330.1 719.0 324.9 720.5 320.2 C722.0 315.5 723.4 312.6 724.0 306.7 C724.6 300.8 724.1 288.8 724.0 285.0 C723.9 281.2 723.9 286.5 723.5 284.1 C723.1 281.7 722.6 274.7 721.9 270.6 C721.2 266.6 720.2 263.4 719.1 259.8 C718.0 256.2 716.4 251.9 715.1 248.9 C713.9 245.9 712.2 242.8 711.6 241.6"/><path d="M711.6 241.6 C712.2 240.1 714.1 235.8 715.1 232.7 C716.1 229.6 717.2 226.8 717.8 223.2 C718.4 219.6 718.5 214.8 718.6 211.0 C718.7 207.2 718.7 203.3 718.1 200.2 C717.5 197.0 716.7 194.7 715.1 192.1 C713.5 189.5 710.8 186.8 708.3 184.5 C705.8 182.2 703.4 179.9 700.2 178.5 C697.1 177.1 693.5 176.5 689.4 175.8 C685.3 175.1 679.9 174.6 675.8 174.5 C671.7 174.4 667.9 174.4 665.0 175.3 C662.1 176.2 660.0 177.8 658.2 179.9 C656.4 182.0 655.6 184.6 654.2 188.0 C652.9 191.4 651.1 195.9 650.1 200.2 C649.1 204.5 648.7 209.2 648.2 213.7 C647.8 218.2 647.7 223.3 647.4 227.3 C647.1 231.3 646.7 235.9 646.6 237.6"/><path d="M646.6 237.6 C646.0 237.5 645.6 237.1 643.3 236.8 C640.9 236.5 637.5 236.1 632.5 236.0 C627.5 235.9 618.9 236.3 613.5 236.5 C608.1 236.7 602.9 236.9 600.0 237.0 C597.1 237.1 598.8 236.7 596.4 237.0 C594.0 237.3 587.4 238.4 585.6 238.7"/><path d="M585.6 238.7 C584.9 236.1 582.8 227.8 581.5 223.2 C580.2 218.6 579.4 214.8 578.0 211.0 C576.6 207.2 575.3 203.6 573.4 200.2 C571.5 196.8 569.3 193.5 566.6 190.7 C563.9 187.9 560.4 185.1 557.2 183.4 C554.1 181.7 550.9 180.7 547.7 180.7 C544.5 180.7 540.9 181.7 538.2 183.4 C535.5 185.1 533.2 187.4 531.4 190.7 C529.6 193.9 528.4 198.6 527.4 202.9 C526.4 207.2 525.9 211.9 525.5 216.4 C525.1 220.9 525.1 225.5 525.2 230.0 C525.3 234.5 525.9 241.2 526.0 243.5"/><path d="M538.7 296.3 C538.4 295.7 537.2 294.2 536.9 292.9 C536.6 291.5 536.4 290.0 536.9 288.2 C537.4 286.4 538.5 284.0 539.6 282.1 C540.7 280.2 542.1 278.3 543.7 276.7 C545.3 275.1 546.7 273.3 549.1 272.6 C551.5 271.9 555.1 272.3 557.9 272.3 C560.7 272.3 563.8 271.9 566.0 272.6 C568.2 273.3 569.6 274.8 571.4 276.7 C573.2 278.6 575.7 281.4 576.9 284.1 C578.1 286.8 578.3 289.8 578.5 292.9 C578.7 295.9 578.7 299.5 578.2 302.4 C577.7 305.3 576.9 308.4 575.5 310.5 C574.1 312.6 572.4 313.9 570.1 315.2 C567.9 316.4 564.7 317.5 562.0 318.0 C559.3 318.5 556.1 318.8 553.8 318.4 C551.5 318.0 550.2 317.0 548.4 315.9 C546.6 314.8 544.5 313.5 543.0 311.9 C541.5 310.3 540.6 308.2 539.6 306.4 C538.6 304.6 538.2 302.9 536.9 301.0 C535.5 299.1 532.4 295.9 531.5 294.9"/><path d="M557.6 274.6 C558.3 275.0 560.6 275.4 562.0 276.7 C563.4 277.9 564.9 280.1 566.0 282.1 C567.1 284.1 568.0 286.3 568.5 288.8 C569.0 291.3 568.9 294.5 568.7 297.0 C568.5 299.5 568.3 301.8 567.4 303.7 C566.5 305.6 565.1 307.1 563.3 308.5 C561.5 309.9 559.0 310.9 556.6 311.9 C554.2 312.9 550.9 313.9 549.1 314.3 C547.3 314.8 546.3 314.6 545.7 314.6"/><path d="M663.8 314.3 C664.7 313.9 667.5 313.1 669.3 311.9 C671.1 310.7 673.0 308.8 674.7 307.1 C676.4 305.4 678.2 303.8 679.4 301.7 C680.6 299.6 681.2 297.1 681.7 294.3 C682.2 291.5 682.4 287.7 682.1 284.8 C681.8 281.9 681.2 279.2 680.1 276.7 C679.0 274.2 677.2 271.8 675.4 269.9 C673.6 268.0 671.9 266.3 669.3 265.6 C666.7 264.9 662.5 265.2 659.8 265.6 C657.1 266.0 655.1 266.6 653.0 267.9 C650.9 269.2 648.5 271.3 646.9 273.3 C645.3 275.3 644.1 277.2 643.5 280.0 C642.9 282.8 643.1 287.1 643.3 290.2 C643.5 293.2 644.1 295.8 644.9 298.3 C645.7 300.8 646.8 303.3 648.3 305.1 C649.8 306.9 651.9 308.2 653.7 309.2 C655.5 310.1 657.2 310.6 659.1 310.8 C661.0 311.0 664.2 310.3 665.2 310.2"/><path d="M676.4 268.3 C675.2 268.5 671.5 268.9 669.3 269.6 C667.1 270.3 665.0 271.3 663.2 272.6 C661.4 273.9 659.7 275.5 658.4 277.3 C657.1 279.1 655.9 280.8 655.3 283.4 C654.7 286.0 655.0 289.7 655.0 292.9 C655.0 296.1 655.1 299.8 655.3 302.4 C655.5 305.0 655.9 307.1 656.4 308.5 C656.9 309.9 658.1 310.4 658.4 310.8"/><path d="M588.7 358.1 C589.0 357.7 589.5 356.3 590.7 355.8 C591.9 355.3 594.4 355.6 595.9 355.2 C597.4 354.8 598.6 354.1 600.0 353.4 C601.4 352.7 602.8 352.1 604.0 351.1 C605.2 350.1 606.7 349.0 607.5 347.6 C608.3 346.2 608.7 344.4 608.7 343.0 C608.7 341.6 608.3 339.8 607.5 338.9 C606.7 338.0 605.2 337.5 604.0 337.5 C602.8 337.5 601.4 338.1 600.5 338.9 C599.6 339.7 599.0 341.0 598.8 342.4 C598.6 343.8 598.7 345.4 599.1 347.0 C599.5 348.6 600.2 350.8 601.1 352.3 C602.0 353.8 603.2 355.3 604.6 356.1 C606.0 356.9 608.0 356.9 609.8 356.9 C611.6 356.9 614.1 356.6 615.6 356.3 C617.1 356.0 618.2 355.3 618.9 354.9 C619.6 354.5 619.6 354.0 619.7 353.8"/></g><circle cx="609.2" cy="372.6" r="0.6" fill="#555"/></svg>
</div></body></html>
